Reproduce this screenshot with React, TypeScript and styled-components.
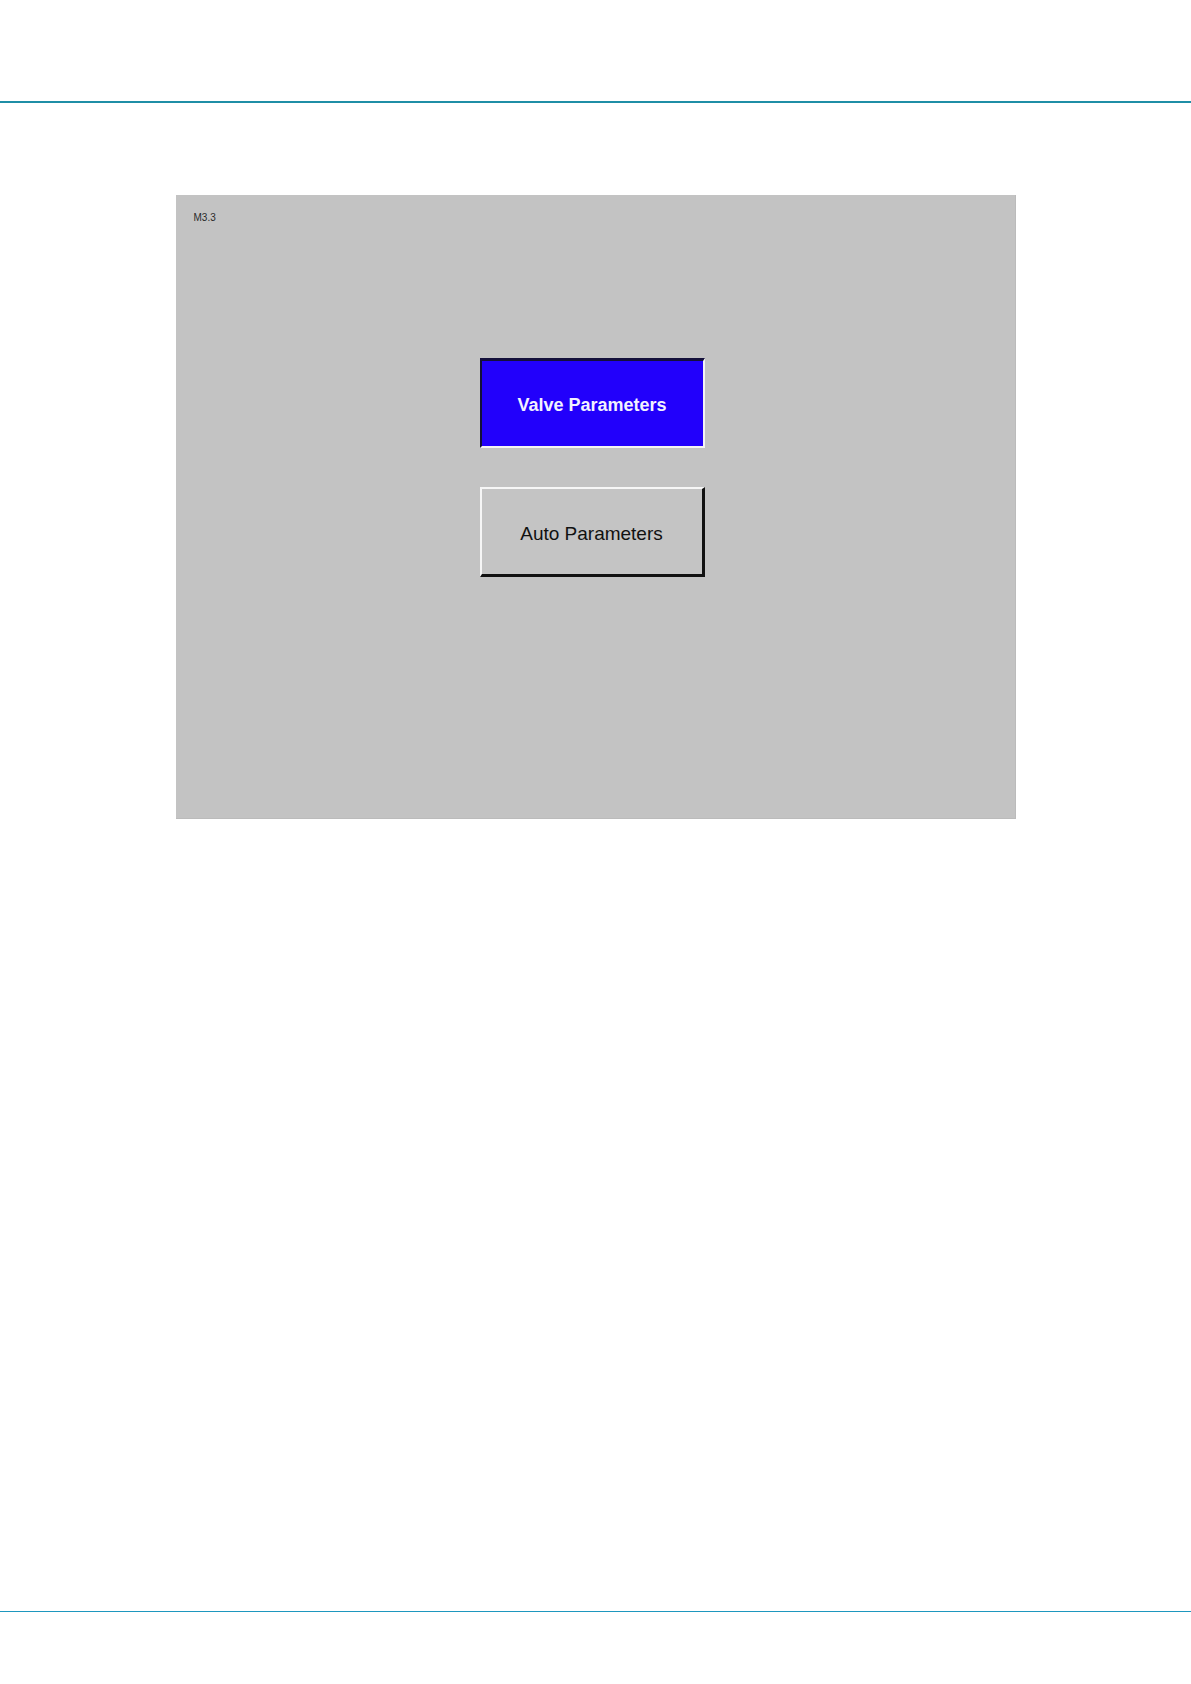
import React from "react";
import styled, { createGlobalStyle } from "styled-components";

const GlobalStyle = createGlobalStyle`
  html, body {
    margin: 0;
    padding: 0;
    background: #ffffff;
    font-family: "Liberation Sans", Arial, sans-serif;
  }
`;

const Page = styled.div`
  width: 1191px;
  height: 1684px;
  display: flex;
  flex-direction: column;
  background: #ffffff;
`;

const HeaderSpace = styled.div`
  height: 101px;
`;

const Rule = styled.div<{ $thick?: boolean }>`
  height: ${(p) => (p.$thick ? "2px" : "1.5px")};
  background: ${(p) => (p.$thick ? "#1f8ea6" : "#1e97be")};
`;

const Content = styled.main`
  flex: 1;
  padding-top: 92px;
  display: flex;
  flex-direction: column;
  align-items: center;
`;

const Screen = styled.section`
  width: 840px;
  height: 624px;
  box-sizing: border-box;
  background: #c3c3c3;
  border-right: 1px solid #bbbbbb;
  border-bottom: 1px solid #bbbbbb;
  padding: 17px 0 0 18px;
  display: flex;
  flex-direction: column;
`;

const ScreenId = styled.div`
  font-size: 10px;
  line-height: 12px;
  color: #2a2a2a;
`;

const ButtonStack = styled.div`
  margin-top: 134px;
  margin-left: 286px;
  display: flex;
  flex-direction: column;
  gap: 39px;
`;

const PanelButton = styled.button<{ $active?: boolean }>`
  width: 225px;
  height: 90px;
  box-sizing: border-box;
  font-family: "Liberation Sans", Arial, sans-serif;
  font-size: ${(p) => (p.$active ? "18px" : "19px")};
  font-weight: ${(p) => (p.$active ? 700 : 400)};
  color: ${(p) => (p.$active ? "#f2f2ff" : "#111111")};
  background: ${(p) => (p.$active ? "#2200fb" : "#c4c4c4")};
  border-style: solid;
  border-width: ${(p) => (p.$active ? "3px 2px 2px 2px" : "2px 3px 3px 2px")};
  border-color: ${(p) =>
    p.$active
      ? "#14103a #f4f4f4 #f4f4f4 #14103a"
      : "#f6f6f6 #111111 #111111 #f6f6f6"};
  padding: 4px 0 0;
  cursor: pointer;
  display: flex;
  align-items: center;
  justify-content: center;
`;

const Footer = styled.footer`
  height: 72px;
`;

export default function App() {
  return (
    <>
      <GlobalStyle />
      <Page>
        <HeaderSpace />
        <Rule $thick />
        <Content>
          <Screen>
            <ScreenId>M3.3</ScreenId>
            <ButtonStack>
              <PanelButton $active>Valve Parameters</PanelButton>
              <PanelButton>Auto Parameters</PanelButton>
            </ButtonStack>
          </Screen>
        </Content>
        <Rule />
        <Footer />
      </Page>
    </>
  );
}
